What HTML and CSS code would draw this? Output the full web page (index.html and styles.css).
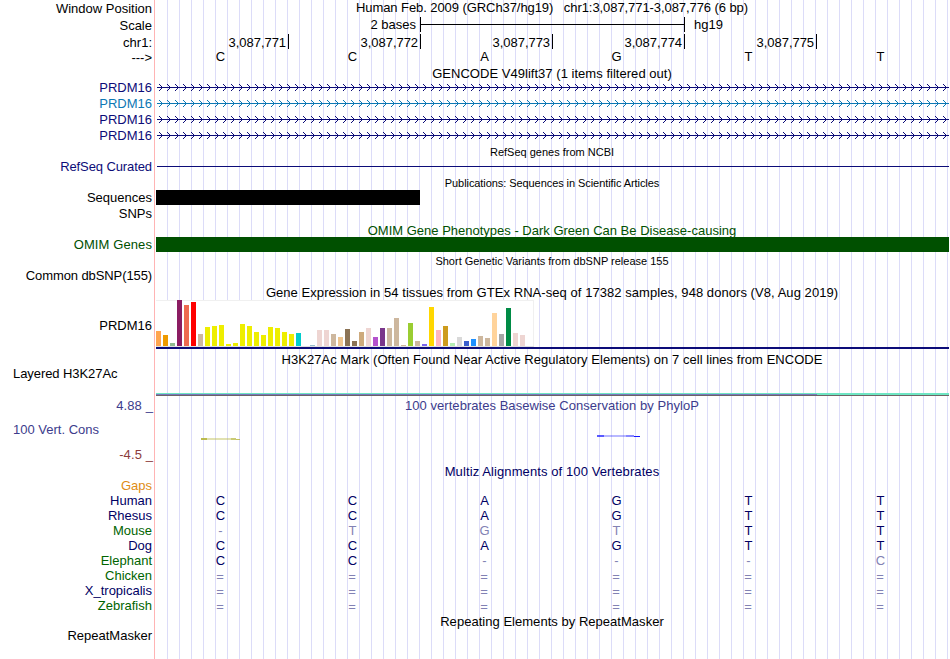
FILE: index.html
```html
<!DOCTYPE html>
<html lang="en">
<head>
<meta charset="utf-8">
<title>Genome Browser</title>
<link rel="stylesheet" href="styles.css">
</head>
<body>
<svg class="defs" width="0" height="0" aria-hidden="true">
  <defs>
    <g id="chev"><path d="M4 4h1v1h-1zM5 5h1v1h-1zM6 6h1v1h-1zM7 7h1v1h-1zM6 8h1v1h-1zM5 9h1v1h-1zM4 10h1v1h-1z"/></g>
    <pattern id="navyArrows" width="8" height="16" patternUnits="userSpaceOnUse"><use href="#chev" fill="#0c0c78"/></pattern>
    <pattern id="blueArrows" width="8" height="16" patternUnits="userSpaceOnUse"><use href="#chev" fill="#0c78b4"/></pattern>
  </defs>
</svg>
<main class="browser">
  <div class="row h16"><div class="label">Window Position</div><div class="track title up t-pos">Human Feb. 2009 (GRCh37/hg19) &nbsp; chr1:3,087,771-3,087,776 (6 bp)</div></div>
  <div class="row h18"><div class="label">Scale</div><div class="track scale"><span class="scale-len">2 bases</span><span class="scale-bar"></span><span class="scale-db">hg19</span></div></div>
  <div class="row h16"><div class="label">chr1:</div><div class="track ticks"><span>3,087,771</span><span>3,087,772</span><span>3,087,773</span><span>3,087,774</span><span>3,087,775</span></div></div>
  <div class="row h15"><div class="label strand">---&gt;</div><div class="track bases up"><b>C</b><b>C</b><b>A</b><b>G</b><b>T</b><b>T</b></div></div>
  <div class="row h15"><div class="label"></div><div class="track title down t-gencode">GENCODE V49lift37 (1 items filtered out)</div></div>
  <div class="row h16 raised navy"><div class="label">PRDM16</div><svg class="track" width="794" height="16"><rect x="2" y="7" width="792" height="1" fill="#0c0c78"/><rect x="2" width="792" height="16" fill="url(#navyArrows)"/></svg></div>
  <div class="row h16 raised blue"><div class="label">PRDM16</div><svg class="track" width="794" height="16"><rect x="2" y="7" width="792" height="1" fill="#0c78b4"/><rect x="2" width="792" height="16" fill="url(#blueArrows)"/></svg></div>
  <div class="row h16 raised navy"><div class="label">PRDM16</div><svg class="track" width="794" height="16"><rect x="2" y="7" width="792" height="1" fill="#0c0c78"/><rect x="2" width="792" height="16" fill="url(#navyArrows)"/></svg></div>
  <div class="row h16 raised navy"><div class="label">PRDM16</div><svg class="track" width="794" height="16"><rect x="2" y="7" width="792" height="1" fill="#0c0c78"/><rect x="2" width="792" height="16" fill="url(#navyArrows)"/></svg></div>
  <div class="row h15"><div class="label"></div><div class="track title down small">RefSeq genes from NCBI</div></div>
  <div class="row h16 raised navy"><div class="label t-curated">RefSeq Curated</div><div class="track"><div class="thin-line"></div></div></div>
  <div class="row h15"><div class="label"></div><div class="track title down small t-pubs">Publications: Sequences in Scientific Articles</div></div>
  <div class="row h16 raised"><div class="label">Sequences</div><div class="track"><div class="block seq"></div></div></div>
  <div class="row h16 raised"><div class="label">SNPs</div><div class="track"></div></div>
  <div class="row h15 omim"><div class="label"></div><div class="track title down">OMIM Gene Phenotypes - Dark Green Can Be Disease-causing</div></div>
  <div class="row h16 raised omim"><div class="label t-omim-label">OMIM Genes</div><div class="track"><div class="block gene-block"></div></div></div>
  <div class="row h15"><div class="label"></div><div class="track title down small">Short Genetic Variants from dbSNP release 155</div></div>
  <div class="row h16 raised"><div class="label t-common">Common dbSNP(155)</div><div class="track"></div></div>
  <div class="row h16"><div class="label"></div><div class="track title t-gtex">Gene Expression in 54 tissues from GTEx RNA-seq of 17382 samples, 948 donors (V8, Aug 2019)</div></div>
  <div class="row h51"><div class="label">PRDM16</div><div class="track gtex">
    <div class="bars">
      <i style="height:15px;background:#ffa54f"></i><i style="height:11px;background:#ee9a00"></i><i style="height:3px;background:#8fbc8f"></i><i style="height:46px;background:#8b1c62"></i><i style="height:41px;background:#ee6a50"></i><i style="height:44px;background:#ff0000"></i><i style="height:12px;background:#cdb79e"></i><i style="height:19px;background:#eeee00"></i><i style="height:20px;background:#eeee00"></i><i style="height:21px;background:#eeee00"></i><i style="height:2px;background:#eeee00"></i><i style="height:3px;background:#eeee00"></i><i style="height:22px;background:#eeee00"></i><i style="height:20px;background:#eeee00"></i><i style="height:14px;background:#eeee00"></i><i style="height:11px;background:#eeee00"></i><i style="height:19px;background:#eeee00"></i><i style="height:18px;background:#eeee00"></i><i style="height:14px;background:#eeee00"></i><i style="height:12px;background:#eeee00"></i><i style="height:13px;background:#00cdcd"></i><i style="height:0"></i><i style="height:1px;background:#9ac0cd"></i><i style="height:16px;background:#eed5d2"></i><i style="height:16px;background:#eed5d2"></i><i style="height:12px;background:#cdb79e"></i><i style="height:9px;background:#eec591"></i><i style="height:17px;background:#8b7355"></i><i style="height:5px;background:#8b7355"></i><i style="height:14px;background:#cdaa7d"></i><i style="height:18px;background:#eed5d2"></i><i style="height:9px;background:#b452cd"></i><i style="height:18px;background:#7a378b"></i><i style="height:18px;background:#cdb79e"></i><i style="height:28px;background:#cdb79e"></i><i style="height:1px;background:#cdb79e"></i><i style="height:23px;background:#9acd32"></i><i style="height:5px;background:#cdb79e"></i><i style="height:2px;background:#7a67ee"></i><i style="height:39px;background:#ffd700"></i><i style="height:16px;background:#ffb6c1"></i><i style="height:20px;background:#cd9b1d"></i><i style="height:3px;background:#b4eeb4"></i><i style="height:9px;background:#d9d9d9"></i><i style="height:5px;background:#3a5fcd"></i><i style="height:7px;background:#1e90ff"></i><i style="height:10px;background:#cdb79e"></i><i style="height:8px;background:#cdb79e"></i><i style="height:33px;background:#ffd39b"></i><i style="height:12px;background:#a6a6a6"></i><i style="height:38px;background:#008b45"></i><i style="height:13px;background:#eed5d2"></i><i style="height:11px;background:#eed5d2"></i><i style="height:0"></i>
    </div>
    <div class="model"></div>
  </div></div>
  <div class="row h16"><div class="label"></div><div class="track title t-h3k">H3K27Ac Mark (Often Found Near Active Regulatory Elements) on 7 cell lines from ENCODE</div></div>
  <div class="row h30"><div class="label left top">Layered H3K27Ac</div><svg class="track" width="794" height="30"><rect x="1" y="26" width="793" height="2" fill="#6ee6c3"/><rect x="1" y="27" width="661" height="1" fill="#7878be"/><rect x="1" y="28" width="793" height="1" fill="#6e6464"/></svg></div>
  <div class="row h16 cons"><div class="label limit">4.88 _</div><div class="track title t-phylo">100 vertebrates Basewise Conservation by PhyloP</div></div>
  <div class="row h34 raised cons"><div class="label left">100 Vert. Cons</div><svg class="track" width="794" height="34">
    <g fill="#b4b43c"><rect x="46" y="25" width="6" height="2" opacity=".9"/><rect x="52" y="25" width="24" height="2" opacity=".4"/><rect x="76" y="25" width="5" height="2" opacity=".7"/><rect x="81" y="26" width="4" height="1" opacity=".8"/></g>
    <g fill="#1414ff"><rect x="442" y="22" width="7" height="2" opacity=".7"/><rect x="449" y="22" width="22" height="2" opacity=".3"/><rect x="471" y="22" width="8" height="2" opacity=".5"/><rect x="479" y="23" width="6" height="1"/></g>
  </svg></div>
  <div class="row h16 raised neg"><div class="label limit">-4.5 _</div><div class="track"></div></div>
  <div class="row h15 multi"><div class="label"></div><div class="track title down t-multiz">Multiz Alignments of 100 Vertebrates</div></div>
  <div class="row h15 gaps"><div class="label">Gaps</div><div class="track"></div></div>
  <div class="row h15 multi"><div class="label">Human</div><div class="track bases"><b>C</b><b>C</b><b>A</b><b>G</b><b>T</b><b>T</b></div></div>
  <div class="row h15 multi"><div class="label">Rhesus</div><div class="track bases"><b>C</b><b>C</b><b>A</b><b>G</b><b>T</b><b>T</b></div></div>
  <div class="row h15 multi alt"><div class="label">Mouse</div><div class="track bases"><s>-</s><s>T</s><s>G</s><s>T</s><b>T</b><b>T</b></div></div>
  <div class="row h15 multi"><div class="label">Dog</div><div class="track bases"><b>C</b><b>C</b><b>A</b><b>G</b><b>T</b><b>T</b></div></div>
  <div class="row h15 multi alt"><div class="label">Elephant</div><div class="track bases"><b>C</b><b>C</b><s>-</s><s>-</s><s>-</s><s>C</s></div></div>
  <div class="row h15 multi alt"><div class="label">Chicken</div><div class="track bases eq"><s>=</s><s>=</s><s>=</s><s>=</s><s>=</s><s>=</s></div></div>
  <div class="row h15 multi"><div class="label">X_tropicalis</div><div class="track bases eq"><s>=</s><s>=</s><s>=</s><s>=</s><s>=</s><s>=</s></div></div>
  <div class="row h15 multi alt"><div class="label">Zebrafish</div><div class="track bases eq"><s>=</s><s>=</s><s>=</s><s>=</s><s>=</s><s>=</s></div></div>
  <div class="row h15"><div class="label"></div><div class="track title down t-rmsk">Repeating Elements by RepeatMasker</div></div>
  <div class="row h15"><div class="label">RepeatMasker</div><div class="track"></div></div>
</main>
</body>
</html>
```
FILE: styles.css
```css
body { margin: 0; background: #fff; }
.defs { display: block; }
.browser {
  box-sizing: border-box;
  width: 950px;
  height: 659px;
  overflow: hidden;
  color: #000;
  font: 13px/15px "Liberation Sans", Arial, sans-serif;
  background:
    linear-gradient(#ffb4b4, #ffb4b4) 154px 0 / 1px 100% no-repeat,
    repeating-linear-gradient(90deg, #dcdcf8 0 1px, transparent 1px 12px) 167px 0 / 783px 100% no-repeat;
}
.row { display: grid; grid-template-columns: 155px 794px; }
.h15 { height: 15px; }
.h16 { height: 16px; }
.h18 { height: 18px; }
.h30 { height: 30px; }
.h34 { height: 34px; }
.h51 { height: 51px; }
.label { align-self: center; padding-right: 3px; text-align: right; white-space: pre; }
.label.left { padding-left: 13px; text-align: left; }
.label.top { align-self: start; margin-top: -1px; letter-spacing: -.07px; }
.label.limit { padding-right: 2px; letter-spacing: .1px; }
.raised .label { margin-bottom: 2px; }
.track { display: block; min-width: 0; }
.title { align-self: center; text-align: center; white-space: nowrap; }
.small { font-size: 11px; }
.up { margin-top: -2px; }
.down { margin-bottom: -2px; }

.t-pos { letter-spacing: -.075px; }
.t-gencode { letter-spacing: .03px; }
.t-pubs { letter-spacing: -.07px; }
.t-gtex { letter-spacing: .055px; }
.t-h3k { letter-spacing: .04px; }
.t-phylo { letter-spacing: .04px; }
.t-multiz { letter-spacing: .1px; }
.t-rmsk { letter-spacing: .03px; }
.t-curated, .t-common { letter-spacing: -.1px; }
.t-omim-label { letter-spacing: .1px; }

.navy { color: #0c0c78; }
.blue { color: #0c78b4; }
.omim { color: #005000; }
.cons { color: #3c3c8c; }
.neg { color: #8c3c3c; }
.gaps { color: #e08c14; }
.multi { color: #000064; }
.alt .label { color: #006400; }

.scale { display: flex; align-items: flex-start; }
.scale-len { width: 261px; margin: 1px 4px 0 0; text-align: right; }
.scale-bar {
  box-sizing: border-box;
  width: 265px;
  height: 15px;
  margin-top: 1px;
  border: solid #000;
  border-width: 0 1px;
  background: linear-gradient(#000, #000) 0 7px / 100% 1px no-repeat;
}
.scale-db { margin: 1px 0 0 9px; }
.ticks { display: flex; padding-left: 2px; }
.ticks span {
  box-sizing: border-box;
  width: 132px;
  height: 15px;
  padding: 1px 2px 0 0;
  border-right: 1px solid #000;
  letter-spacing: -.05px;
  text-align: right;
}
.bases {
  display: grid;
  grid-template-columns: repeat(6, 132px);
  align-self: center;
  margin-left: -.5px;
  text-align: center;
}
.bases b { font-weight: normal; }
.bases s { color: #8282b4; text-decoration: none; }
.eq { margin: 0 0 -2px -1px; }

.thin-line { height: 1px; margin: 7px 0 0 2px; background: #0c0c78; }
.block { height: 15px; margin-left: 1px; }
.seq { width: 264px; background: #000; }
.gene-block { background: #005000; }

.gtex { padding-left: 1px; }
.bars {
  box-sizing: border-box;
  display: flex;
  align-items: flex-end;
  gap: 2px;
  width: 378px;
  height: 47px;
  border-bottom: 1px solid #e0e0e0;
  background: #fff;
  box-shadow: inset 0 1px #f0f0f0, inset -1px 0 #f0f0f0;
}
.bars i { flex: 0 0 5px; }
.model { height: 2px; background: #0c0c78; }
```
